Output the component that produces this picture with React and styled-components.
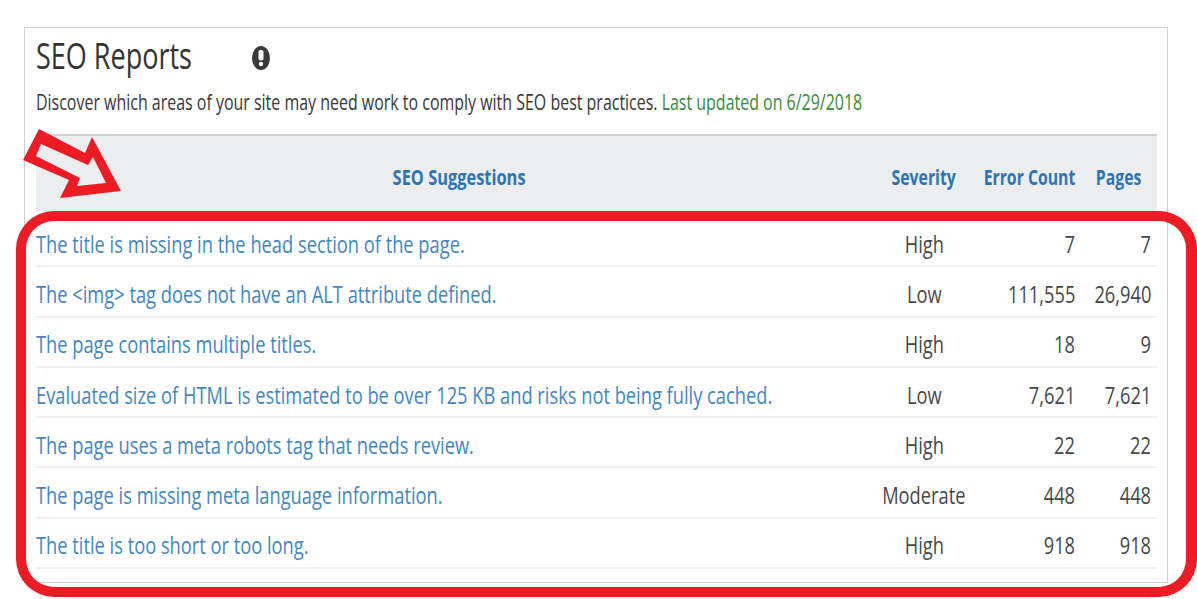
import React from "react";
import styled, { createGlobalStyle } from "styled-components";

const GlobalStyle = createGlobalStyle`
  html, body {
    margin: 0;
    background: #fff;
    font-family: "Open Sans", "Liberation Sans", sans-serif;
  }
  #root {
    height: 599px;
    overflow: hidden;
  }
`;

const rows = [
  ["The title is missing in the head section of the page.", "High", "7", "7"],
  ["The <img> tag does not have an ALT attribute defined.", "Low", "111,555", "26,940"],
  ["The page contains multiple titles.", "High", "18", "9"],
  ["Evaluated size of HTML is estimated to be over 125 KB and risks not being fully cached.", "Low", "7,621", "7,621"],
  ["The page uses a meta robots tag that needs review.", "High", "22", "22"],
  ["The page is missing meta language information.", "Moderate", "448", "448"],
  ["The title is too short or too long.", "High", "918", "918"],
];

const Page = styled.div`
  position: relative;
  width: 1197px;
  height: 599px;
  padding: 27px 29px 0 24px;
  box-sizing: border-box;
`;

const Card = styled.section`
  height: 556px;
  box-sizing: border-box;
  border: 1px solid #cfcfcf;
  padding: 0 10px 0 11px;
`;

const TitleRow = styled.div`
  display: flex;
  align-items: center;
  height: 60px;
`;

const Squeezed = styled.span`
  display: inline-block;
  white-space: nowrap;
  transform: scaleX(${(p) => p.$x || 0.746});
  transform-origin: ${(p) => p.$origin || "left"} center;
`;

const Title = styled.h1`
  margin: 0 0 4px;
  width: 215px;
  font-size: 36px;
  font-weight: 400;
  line-height: 56px;
  color: #333;
`;

const Description = styled.p`
  margin: 0;
  height: 46px;
  font-size: 21px;
  line-height: 29px;
  color: #383838;
`;

const Updated = styled.span`
  color: #3c8a3c;
`;

const Grid = styled.div`
  display: grid;
  grid-template-columns: 834px 108px 103px 76px;
  align-items: center;
`;

const HeaderRow = styled(Grid)`
  height: 77px;
  margin-bottom: 6px;
  padding-top: 6px;
  box-sizing: border-box;
  border-top: 2px solid #cdd0d2;
  background: #ebedef;
`;

const HeaderCell = styled.div`
  display: flex;
  justify-content: center;
  padding-left: ${(p) => p.$indent || 0}px;
  font-size: 20.5px;
  font-weight: 700;
  color: #2e74b5;
`;

const Row = styled(Grid)`
  height: 50.3px;
  padding-top: 4px;
  box-sizing: border-box;
  border-bottom: 2px solid #eef0f1;
  font-size: 24.5px;
  color: #484848;
`;

const SuggestionLink = styled.a`
  color: #4486bf;
  text-decoration: none;
`;

const Severity = styled.div`
  display: flex;
  justify-content: center;
`;

const Count = styled.div`
  display: flex;
  justify-content: flex-end;
  padding-right: 6px;
`;

const Frame = styled.div`
  position: absolute;
  left: 16px;
  top: 211px;
  width: 1181px;
  height: 386px;
  box-sizing: border-box;
  border: 10px solid #ed1c24;
  border-right-width: 11px;
  border-radius: 38px;
  pointer-events: none;
`;

const Arrow = styled.svg`
  position: absolute;
  left: 0;
  top: 120px;
`;

function InfoIcon() {
  return (
    <svg width="20" height="26" viewBox="0 0 20 26" aria-hidden="true">
      <ellipse cx="10" cy="13" rx="9" ry="12" fill="#3a3a3a" />
      <rect x="7.5" y="5" width="5" height="10.5" rx="2" fill="#fff" />
      <rect x="8" y="17" width="4" height="4" rx="1.2" fill="#fff" />
    </svg>
  );
}

export default function App() {
  return (
    <Page>
      <GlobalStyle />
      <Card>
        <TitleRow>
          <Title>
            <Squeezed $x={0.75}>SEO Reports</Squeezed>
          </Title>
          <InfoIcon />
        </TitleRow>
        <Description>
          <Squeezed $x={0.76}>
            Discover which areas of your site may need work to comply with SEO best practices.{" "}
            <Updated>Last updated on 6/29/2018</Updated>
          </Squeezed>
        </Description>
        <HeaderRow>
          <HeaderCell $indent={12}>
            <Squeezed $x={0.8} $origin="center">SEO Suggestions</Squeezed>
          </HeaderCell>
          <HeaderCell>
            <Squeezed $x={0.77} $origin="center">Severity</Squeezed>
          </HeaderCell>
          <HeaderCell>
            <Squeezed $x={0.77} $origin="center">Error Count</Squeezed>
          </HeaderCell>
          <HeaderCell>
            <Squeezed $x={0.77} $origin="center">Pages</Squeezed>
          </HeaderCell>
        </HeaderRow>
        {rows.map(([name, severity, errors, pages]) => (
          <Row key={name}>
            <SuggestionLink href="#">
              <Squeezed>{name}</Squeezed>
            </SuggestionLink>
            <Severity>
              <Squeezed $origin="center">{severity}</Squeezed>
            </Severity>
            <Count>
              <Squeezed $origin="right">{errors}</Squeezed>
            </Count>
            <Count>
              <Squeezed $origin="right">{pages}</Squeezed>
            </Count>
          </Row>
        ))}
      </Card>
      <Frame />
      <Arrow width="130" height="90" viewBox="0 120 130 90" aria-hidden="true">
        <path
          fillRule="evenodd"
          fill="#ed1c24"
          d="M39 129 L85 153 L92 137 L121 191 L60 198 L69 180 L23 160 Z M41 144 L36 156 L80 178 L77 186 L106 183 L93 157 L88 165 Z"
        />
      </Arrow>
    </Page>
  );
}
